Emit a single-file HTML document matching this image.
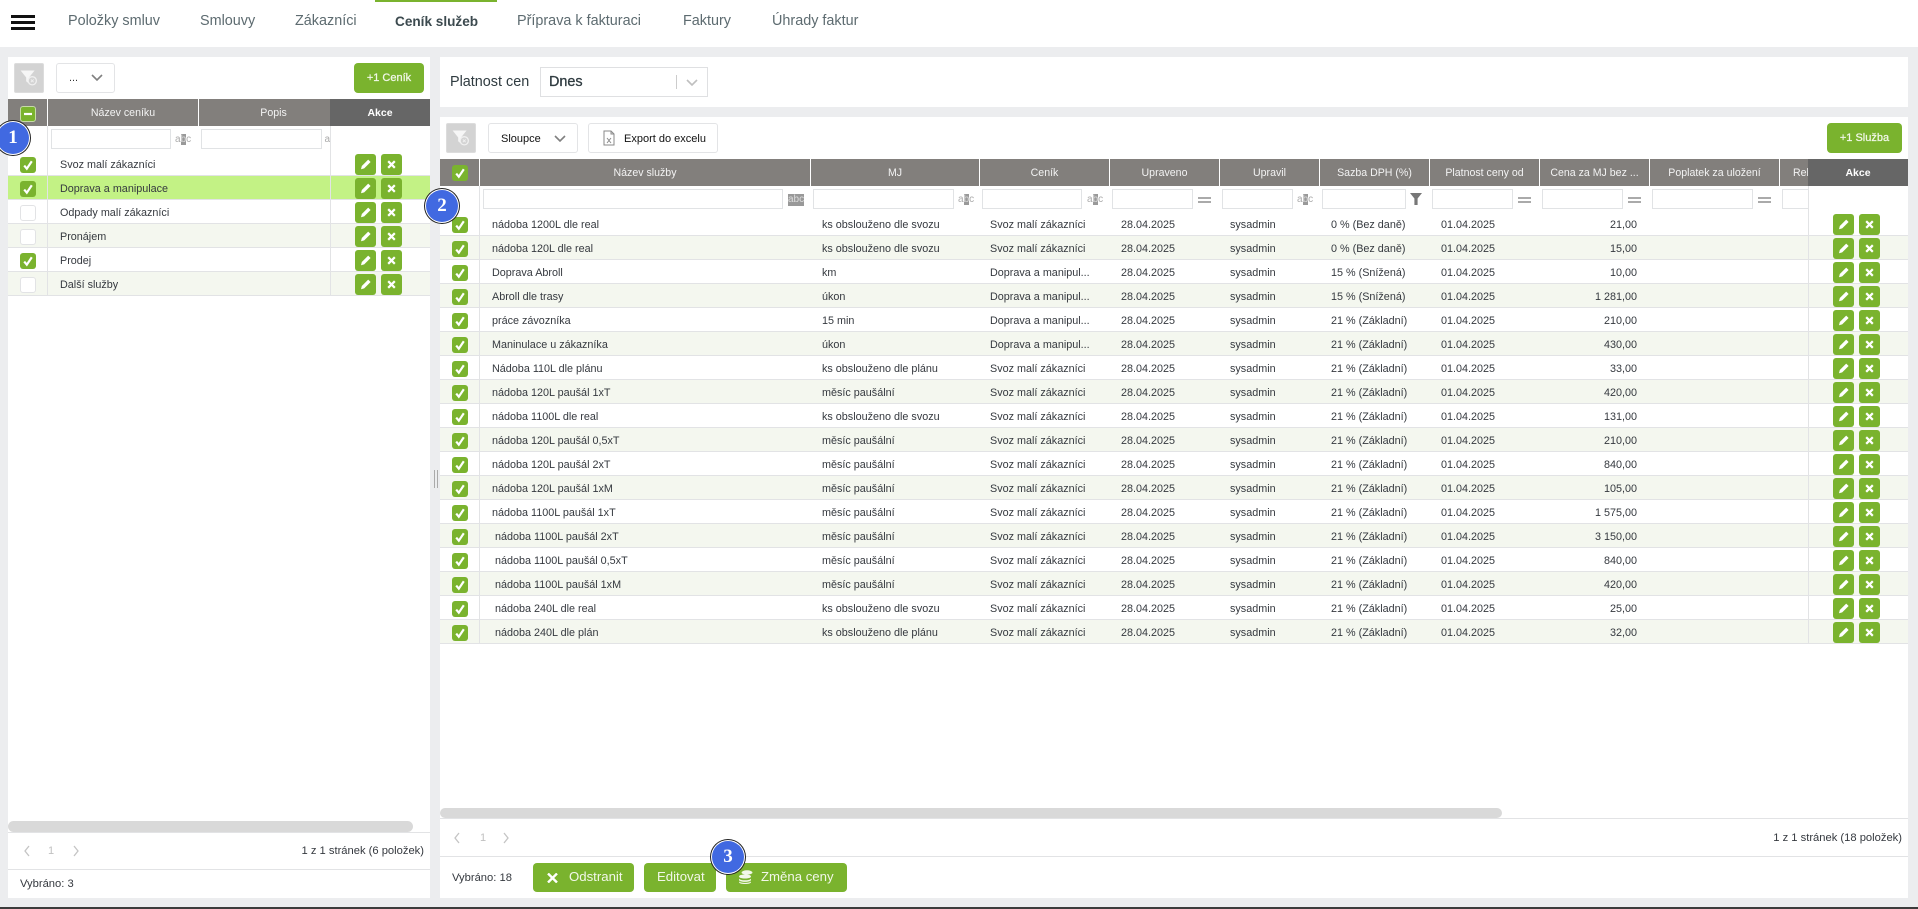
<!DOCTYPE html>
<html lang="cs"><head><meta charset="utf-8"><title>Ceník služeb</title>
<style>
*{box-sizing:border-box}
html,body{margin:0;padding:0;width:1918px;height:909px;overflow:hidden;background:#ecedef;font-family:"Liberation Sans",sans-serif;font-size:10.8px;color:#35393f}
.x{position:absolute}
.nav{left:0;top:0;width:1918px;height:47px;background:#fff}
.nav a{position:absolute;top:13px;font-size:14.4px;line-height:17px;color:#5d6b70;white-space:nowrap}
.nav a.on{color:#3c4a4f;font-weight:bold;font-size:13.6px}
.bar{position:absolute;left:11px;width:24px;height:3px;background:#111}
.panel{position:absolute;background:#fff}
.hd{position:absolute;height:27px;background:#827f7c;color:#f3f3f3;font-size:10.6px;line-height:29px;text-align:center;border-right:1px solid #fff;overflow:hidden;white-space:nowrap}
.ak{background:#666;color:#fff;font-weight:bold;font-size:10.5px;border-right:0}
.inp{position:absolute;height:20px;background:#fff;border:1px solid #e1e3e5}
.abc{position:absolute;width:16px;height:12px;font-size:10px;line-height:12px;color:#aaa;text-align:center;white-space:nowrap}
.abc b{font-weight:normal;background:#999;color:#ddd}
.abc.d{background:#999;color:#ddd}
.eq{position:absolute;width:13px;height:6px;border-top:2px solid #aaa;border-bottom:2px solid #aaa}
.r{position:absolute;height:24px;border-bottom:1px solid #e2e3e5;background:#fff}
.r.alt{background:#f4f7ef}
.r.sel{background:#c3f285}
.r span{position:absolute;top:1px;line-height:24px;white-space:nowrap;overflow:hidden;text-overflow:ellipsis}
.cb{position:absolute;display:block;width:16px;height:16px;border-radius:3px;background:#7ab32e}
.cb svg{display:block;width:16px;height:16px}
.cb.off{background:#fff;border:1px solid #e2e3e5}
.cb.hm{border:1px solid #c7dba8}
.bt{position:absolute;display:block;width:21px;height:21px;border-radius:3px;background:#7ab32e;top:2px}
.bt svg{display:block;width:21px;height:21px}
.btn{position:absolute;background:#7ab32e;color:#f2f7e9;border-radius:4px;text-align:center}
.w{position:absolute;background:#fff;border:1px solid #e3e4e6;border-radius:3px}
.fb{position:absolute;width:30px;height:30px;background:#d3d3d3;border:1px solid #dcdcdc;border-radius:2px}
.vl{position:absolute;width:1px;background:#e2e3e5}
.hl{position:absolute;height:1px;background:#e2e3e5}
.cir{position:absolute;width:32px;height:32px;border-radius:50%;background:#4169e1;color:#fff;font-family:"Liberation Serif",serif;font-weight:bold;font-size:19px;line-height:32px;text-align:center;box-shadow:0 0 0 1px #fff,0 0 0 2px #222}
.t{position:absolute;white-space:nowrap}
.n{left:52px;width:325px}.m{left:382px;width:160px}.c{left:550px;width:124px}.u{left:681px}.v{left:790px}.s{left:891px}.p{left:1001px}.q{left:1101px;width:96px;text-align:right}
.bp{left:1393px}.bx{left:1419px}.lp{left:347px}.lx{left:373px}
.rr{left:0;width:1468px}.rl{left:0;width:422px}
.cr{left:12px;top:5px}.cl{left:12px;top:5px}
.ln{left:52px}
</style></head><body>
<svg width="0" height="0" style="position:absolute">
<symbol id="k" viewBox="0 0 16 16"><path d="M4.2 8.6l2.6 3.1L11.8 4.3" fill="none" stroke="#fff" stroke-width="2.2"/></symbol>
<symbol id="pe" viewBox="0 0 21 21"><path d="M6 15.2l.8-3.2 6.4-6.4 2.4 2.4-6.4 6.4z" fill="#fff"/></symbol>
<symbol id="xx" viewBox="0 0 21 21"><path d="M7.2 7.2l6.6 6.6M13.8 7.2l-6.6 6.6" fill="none" stroke="#fff" stroke-width="2.2"/></symbol>
<symbol id="ch" viewBox="0 0 12 7"><path d="M1 1l5 5 5-5" fill="none" stroke="#808080" stroke-width="1.6"/></symbol>
<symbol id="ff" viewBox="0 0 30 30"><path d="M6 7h15l-6 7.5V21l-3-2.5v-4z" fill="#f6f6f6"/><circle cx="18.5" cy="18" r="4.4" fill="#d3d3d3" stroke="#f0f0f0" stroke-width="1.4"/><path d="M17 16.5l3 3M20 16.5l-3 3" stroke="#f0f0f0" stroke-width="1"/></symbol>
</svg>

<div class="x nav">
<div class="bar" style="top:15px"></div><div class="bar" style="top:21px"></div><div class="bar" style="top:27px"></div>
<div class="x" style="left:375px;top:0;width:122px;height:2px;background:#7ab32e"></div>
<a style="left:68px">Položky smluv</a><a style="left:200px">Smlouvy</a><a style="left:295px">Zákazníci</a><a class="on" style="left:395px">Ceník služeb</a><a style="left:517px">Příprava k fakturaci</a><a style="left:683px">Faktury</a><a style="left:772px">Úhrady faktur</a>
</div>

<!-- LEFT PANEL -->
<div class="panel" style="left:8px;top:57px;width:422px;height:841px"></div>
<div class="fb" style="left:14px;top:63px"><svg width="28" height="28" viewBox="0 0 30 30"><use href="#ff"/></svg></div>
<div class="w" style="left:56px;top:63px;width:59px;height:30px"><span class="t" style="left:12px;top:8px;color:#333">...</span><svg class="x" style="left:34px;top:10px" width="12" height="7"><use href="#ch"/></svg></div>
<div class="btn" style="left:354px;top:63px;width:70px;height:30px;line-height:31px;font-size:11px;-webkit-text-stroke:.25px #f2f7e9">+1 Ceník</div>

<div class="hd" style="left:8px;top:99px;width:40px"></div>
<i class="cb hm" style="left:20px;top:106px"><svg viewBox="0 0 14 14" style="width:14px;height:14px"><path d="M3 7h8" stroke="#fff" stroke-width="2.2"/></svg></i>
<div class="hd" style="left:48px;top:99px;width:151px">Název ceníku</div>
<div class="hd" style="left:199px;top:99px;width:131px;padding-left:18px;border-right:0">Popis</div>
<div class="hd ak" style="left:330px;top:99px;width:100px">Akce</div>

<div class="inp" style="left:51px;top:129px;width:120px"></div>
<span class="abc" style="left:175px;top:134px">a<b>b</b>c</span>
<div class="inp" style="left:201px;top:129px;width:121px"></div>
<span class="abc" style="left:322px;top:134px;text-align:right;width:8px;overflow:hidden">a</span>
<div class="hl" style="left:8px;top:152px;width:422px"></div>

<div class="x" style="left:8px;top:152px;width:422px;height:144px">
<div class="r rl" style="top:0"><i class="cb cl"><svg><use href="#k"/></svg></i><span class="ln">Svoz malí zákazníci</span><i class="bt lp"><svg><use href="#pe"/></svg></i><i class="bt lx"><svg><use href="#xx"/></svg></i></div>
<div class="r rl sel" style="top:24px"><i class="cb cl"><svg><use href="#k"/></svg></i><span class="ln">Doprava a manipulace</span><i class="bt lp"><svg><use href="#pe"/></svg></i><i class="bt lx"><svg><use href="#xx"/></svg></i></div>
<div class="r rl" style="top:48px"><i class="cb cl off"></i><span class="ln">Odpady malí zákazníci</span><i class="bt lp"><svg><use href="#pe"/></svg></i><i class="bt lx"><svg><use href="#xx"/></svg></i></div>
<div class="r rl alt" style="top:72px"><i class="cb cl off"></i><span class="ln">Pronájem</span><i class="bt lp"><svg><use href="#pe"/></svg></i><i class="bt lx"><svg><use href="#xx"/></svg></i></div>
<div class="r rl" style="top:96px"><i class="cb cl"><svg><use href="#k"/></svg></i><span class="ln">Prodej</span><i class="bt lp"><svg><use href="#pe"/></svg></i><i class="bt lx"><svg><use href="#xx"/></svg></i></div>
<div class="r rl alt" style="top:120px"><i class="cb cl off"></i><span class="ln">Další služby</span><i class="bt lp"><svg><use href="#pe"/></svg></i><i class="bt lx"><svg><use href="#xx"/></svg></i></div>
</div>
<div class="vl" style="left:47px;top:126px;height:170px"></div>
<div class="vl" style="left:330px;top:126px;height:170px"></div>

<div class="x" style="left:8px;top:821px;width:405px;height:11px;background:#d9d9d9;border-radius:6px"></div>
<div class="hl" style="left:8px;top:832px;width:422px"></div>
<svg class="x" style="left:22px;top:845px" width="60" height="12"><path d="M7 1L3 6l4 5M52 1l4 5-4 5" fill="none" stroke="#c4c4c4" stroke-width="1.3"/></svg>
<span class="t" style="left:48px;top:845px;color:#c0c0c0;font-size:11px">1</span>
<span class="t" style="right:1494px;top:845px;font-size:11.2px">1 z 1 stránek (6 položek)</span>
<div class="hl" style="left:8px;top:869px;width:422px"></div>
<span class="t" style="left:20px;top:878px;font-size:11.2px">Vybráno: 3</span>

<div class="x" style="left:434px;top:470px;width:4px;height:18px;border-left:1px solid #aaa;border-right:1px solid #aaa"></div>

<!-- TOP RIGHT -->
<div class="panel" style="left:440px;top:57px;width:1468px;height:50px"></div>
<span class="t" style="left:450px;top:74px;font-size:14.4px;color:#2f3b40">Platnost cen</span>
<div class="x" style="left:540px;top:67px;width:168px;height:30px;background:#fff;border:1px solid #dfe0e2"></div>
<span class="t" style="left:549px;top:74px;font-size:14.4px;color:#2f3b40;-webkit-text-stroke:.3px #2f3b40">Dnes</span>
<div class="x" style="left:676px;top:75px;width:1px;height:14px;background:#ccc"></div>
<svg class="x" style="left:686px;top:79px" width="12" height="7"><use href="#ch" style="opacity:.5"/></svg>

<!-- MAIN RIGHT -->
<div class="panel" style="left:440px;top:117px;width:1468px;height:781px"></div>
<div class="fb" style="left:446px;top:123px"><svg width="28" height="28" viewBox="0 0 30 30"><use href="#ff"/></svg></div>
<div class="w" style="left:488px;top:123px;width:90px;height:30px"><span class="t" style="left:12px;top:9px;font-size:11px;color:#111">Sloupce</span><svg class="x" style="left:65px;top:11px" width="12" height="7"><use href="#ch"/></svg></div>
<div class="w" style="left:588px;top:123px;width:130px;height:30px"><svg class="x" style="left:14px;top:6px" width="12" height="16" viewBox="0 0 12 16"><path d="M1 1h7l3 3v11H1zM8 1v3h3" fill="#fff" stroke="#888" stroke-width="1"/><path d="M4 8l4 5M8 8l-4 5" stroke="#888" stroke-width="1"/></svg><span class="t" style="left:35px;top:9px;font-size:11px;color:#111">Export do excelu</span></div>
<div class="btn" style="left:1827px;top:123px;width:75px;height:30px;line-height:31px;font-size:11px;-webkit-text-stroke:.25px #f2f7e9">+1 Služba</div>

<div class="hd" style="left:440px;top:159px;width:40px"></div>
<i class="cb" style="left:452px;top:165px"><svg><use href="#k"/></svg></i>
<div class="hd" style="left:480px;top:159px;width:331px">Název služby</div>
<div class="hd" style="left:811px;top:159px;width:169px">MJ</div>
<div class="hd" style="left:980px;top:159px;width:130px">Ceník</div>
<div class="hd" style="left:1110px;top:159px;width:110px">Upraveno</div>
<div class="hd" style="left:1220px;top:159px;width:100px">Upravil</div>
<div class="hd" style="left:1320px;top:159px;width:110px">Sazba DPH (%)</div>
<div class="hd" style="left:1430px;top:159px;width:110px">Platnost ceny od</div>
<div class="hd" style="left:1540px;top:159px;width:110px">Cena za MJ bez ...</div>
<div class="hd" style="left:1650px;top:159px;width:130px">Poplatek za uložení</div>
<div class="hd" style="left:1780px;top:159px;width:28px;text-align:left;padding-left:13px;border-right:0">Rel</div>
<div class="hd ak" style="left:1808px;top:159px;width:100px">Akce</div>

<div class="inp" style="left:483px;top:189px;width:300px"></div><span class="abc d" style="left:788px;top:194px">abc</span>
<div class="inp" style="left:813px;top:189px;width:141px"></div><span class="abc" style="left:958px;top:194px">a<b>b</b>c</span>
<div class="inp" style="left:982px;top:189px;width:100px"></div><span class="abc" style="left:1087px;top:194px">a<b>b</b>c</span>
<div class="inp" style="left:1112px;top:189px;width:81px"></div><div class="eq" style="left:1198px;top:197px"></div>
<div class="inp" style="left:1222px;top:189px;width:71px"></div><span class="abc" style="left:1297px;top:194px">a<b>b</b>c</span>
<div class="inp" style="left:1322px;top:189px;width:84px"></div><svg class="x" style="left:1410px;top:193px" width="12" height="12"><path d="M0 0h12L7.6 5.5V12H4.4V5.5z" fill="#777"/></svg>
<div class="inp" style="left:1432px;top:189px;width:81px"></div><div class="eq" style="left:1518px;top:197px"></div>
<div class="inp" style="left:1542px;top:189px;width:81px"></div><div class="eq" style="left:1628px;top:197px"></div>
<div class="inp" style="left:1652px;top:189px;width:101px"></div><div class="eq" style="left:1758px;top:197px"></div>
<div class="inp" style="left:1782px;top:189px;width:26px;border-right:0"></div>
<div class="hl" style="left:440px;top:212px;width:1468px"></div>

<div class="x" style="left:440px;top:212px;width:1468px;height:432px">
<div class="r rr" style="top:0"><i class="cb cr"><svg><use href="#k"/></svg></i><span class="n">nádoba 1200L dle real</span><span class="m">ks obslouženo dle svozu</span><span class="c">Svoz malí zákazníci</span><span class="u">28.04.2025</span><span class="v">sysadmin</span><span class="s">0 % (Bez daně)</span><span class="p">01.04.2025</span><span class="q">21,00</span><i class="bt bp"><svg><use href="#pe"/></svg></i><i class="bt bx"><svg><use href="#xx"/></svg></i></div>
<div class="r rr alt" style="top:24px"><i class="cb cr"><svg><use href="#k"/></svg></i><span class="n">nádoba 120L dle real</span><span class="m">ks obslouženo dle svozu</span><span class="c">Svoz malí zákazníci</span><span class="u">28.04.2025</span><span class="v">sysadmin</span><span class="s">0 % (Bez daně)</span><span class="p">01.04.2025</span><span class="q">15,00</span><i class="bt bp"><svg><use href="#pe"/></svg></i><i class="bt bx"><svg><use href="#xx"/></svg></i></div>
<div class="r rr" style="top:48px"><i class="cb cr"><svg><use href="#k"/></svg></i><span class="n">Doprava Abroll</span><span class="m">km</span><span class="c">Doprava a manipul...</span><span class="u">28.04.2025</span><span class="v">sysadmin</span><span class="s">15 % (Snížená)</span><span class="p">01.04.2025</span><span class="q">10,00</span><i class="bt bp"><svg><use href="#pe"/></svg></i><i class="bt bx"><svg><use href="#xx"/></svg></i></div>
<div class="r rr alt" style="top:72px"><i class="cb cr"><svg><use href="#k"/></svg></i><span class="n">Abroll dle trasy</span><span class="m">úkon</span><span class="c">Doprava a manipul...</span><span class="u">28.04.2025</span><span class="v">sysadmin</span><span class="s">15 % (Snížená)</span><span class="p">01.04.2025</span><span class="q">1 281,00</span><i class="bt bp"><svg><use href="#pe"/></svg></i><i class="bt bx"><svg><use href="#xx"/></svg></i></div>
<div class="r rr" style="top:96px"><i class="cb cr"><svg><use href="#k"/></svg></i><span class="n">práce závozníka</span><span class="m">15 min</span><span class="c">Doprava a manipul...</span><span class="u">28.04.2025</span><span class="v">sysadmin</span><span class="s">21 % (Základní)</span><span class="p">01.04.2025</span><span class="q">210,00</span><i class="bt bp"><svg><use href="#pe"/></svg></i><i class="bt bx"><svg><use href="#xx"/></svg></i></div>
<div class="r rr alt" style="top:120px"><i class="cb cr"><svg><use href="#k"/></svg></i><span class="n">Maninulace u zákazníka</span><span class="m">úkon</span><span class="c">Doprava a manipul...</span><span class="u">28.04.2025</span><span class="v">sysadmin</span><span class="s">21 % (Základní)</span><span class="p">01.04.2025</span><span class="q">430,00</span><i class="bt bp"><svg><use href="#pe"/></svg></i><i class="bt bx"><svg><use href="#xx"/></svg></i></div>
<div class="r rr" style="top:144px"><i class="cb cr"><svg><use href="#k"/></svg></i><span class="n">Nádoba 110L dle plánu</span><span class="m">ks obslouženo dle plánu</span><span class="c">Svoz malí zákazníci</span><span class="u">28.04.2025</span><span class="v">sysadmin</span><span class="s">21 % (Základní)</span><span class="p">01.04.2025</span><span class="q">33,00</span><i class="bt bp"><svg><use href="#pe"/></svg></i><i class="bt bx"><svg><use href="#xx"/></svg></i></div>
<div class="r rr alt" style="top:168px"><i class="cb cr"><svg><use href="#k"/></svg></i><span class="n">nádoba 120L paušál 1xT</span><span class="m">měsíc paušální</span><span class="c">Svoz malí zákazníci</span><span class="u">28.04.2025</span><span class="v">sysadmin</span><span class="s">21 % (Základní)</span><span class="p">01.04.2025</span><span class="q">420,00</span><i class="bt bp"><svg><use href="#pe"/></svg></i><i class="bt bx"><svg><use href="#xx"/></svg></i></div>
<div class="r rr" style="top:192px"><i class="cb cr"><svg><use href="#k"/></svg></i><span class="n">nádoba 1100L dle real</span><span class="m">ks obslouženo dle svozu</span><span class="c">Svoz malí zákazníci</span><span class="u">28.04.2025</span><span class="v">sysadmin</span><span class="s">21 % (Základní)</span><span class="p">01.04.2025</span><span class="q">131,00</span><i class="bt bp"><svg><use href="#pe"/></svg></i><i class="bt bx"><svg><use href="#xx"/></svg></i></div>
<div class="r rr alt" style="top:216px"><i class="cb cr"><svg><use href="#k"/></svg></i><span class="n">nádoba 120L paušál 0,5xT</span><span class="m">měsíc paušální</span><span class="c">Svoz malí zákazníci</span><span class="u">28.04.2025</span><span class="v">sysadmin</span><span class="s">21 % (Základní)</span><span class="p">01.04.2025</span><span class="q">210,00</span><i class="bt bp"><svg><use href="#pe"/></svg></i><i class="bt bx"><svg><use href="#xx"/></svg></i></div>
<div class="r rr" style="top:240px"><i class="cb cr"><svg><use href="#k"/></svg></i><span class="n">nádoba 120L paušál 2xT</span><span class="m">měsíc paušální</span><span class="c">Svoz malí zákazníci</span><span class="u">28.04.2025</span><span class="v">sysadmin</span><span class="s">21 % (Základní)</span><span class="p">01.04.2025</span><span class="q">840,00</span><i class="bt bp"><svg><use href="#pe"/></svg></i><i class="bt bx"><svg><use href="#xx"/></svg></i></div>
<div class="r rr alt" style="top:264px"><i class="cb cr"><svg><use href="#k"/></svg></i><span class="n">nádoba 120L paušál 1xM</span><span class="m">měsíc paušální</span><span class="c">Svoz malí zákazníci</span><span class="u">28.04.2025</span><span class="v">sysadmin</span><span class="s">21 % (Základní)</span><span class="p">01.04.2025</span><span class="q">105,00</span><i class="bt bp"><svg><use href="#pe"/></svg></i><i class="bt bx"><svg><use href="#xx"/></svg></i></div>
<div class="r rr" style="top:288px"><i class="cb cr"><svg><use href="#k"/></svg></i><span class="n">nádoba 1100L paušál 1xT</span><span class="m">měsíc paušální</span><span class="c">Svoz malí zákazníci</span><span class="u">28.04.2025</span><span class="v">sysadmin</span><span class="s">21 % (Základní)</span><span class="p">01.04.2025</span><span class="q">1 575,00</span><i class="bt bp"><svg><use href="#pe"/></svg></i><i class="bt bx"><svg><use href="#xx"/></svg></i></div>
<div class="r rr alt" style="top:312px"><i class="cb cr"><svg><use href="#k"/></svg></i><span class="n" style="padding-left:3px">nádoba 1100L paušál 2xT</span><span class="m">měsíc paušální</span><span class="c">Svoz malí zákazníci</span><span class="u">28.04.2025</span><span class="v">sysadmin</span><span class="s">21 % (Základní)</span><span class="p">01.04.2025</span><span class="q">3 150,00</span><i class="bt bp"><svg><use href="#pe"/></svg></i><i class="bt bx"><svg><use href="#xx"/></svg></i></div>
<div class="r rr" style="top:336px"><i class="cb cr"><svg><use href="#k"/></svg></i><span class="n" style="padding-left:3px">nádoba 1100L paušál 0,5xT</span><span class="m">měsíc paušální</span><span class="c">Svoz malí zákazníci</span><span class="u">28.04.2025</span><span class="v">sysadmin</span><span class="s">21 % (Základní)</span><span class="p">01.04.2025</span><span class="q">840,00</span><i class="bt bp"><svg><use href="#pe"/></svg></i><i class="bt bx"><svg><use href="#xx"/></svg></i></div>
<div class="r rr alt" style="top:360px"><i class="cb cr"><svg><use href="#k"/></svg></i><span class="n" style="padding-left:3px">nádoba 1100L paušál 1xM</span><span class="m">měsíc paušální</span><span class="c">Svoz malí zákazníci</span><span class="u">28.04.2025</span><span class="v">sysadmin</span><span class="s">21 % (Základní)</span><span class="p">01.04.2025</span><span class="q">420,00</span><i class="bt bp"><svg><use href="#pe"/></svg></i><i class="bt bx"><svg><use href="#xx"/></svg></i></div>
<div class="r rr" style="top:384px"><i class="cb cr"><svg><use href="#k"/></svg></i><span class="n" style="padding-left:3px">nádoba 240L dle real</span><span class="m">ks obslouženo dle svozu</span><span class="c">Svoz malí zákazníci</span><span class="u">28.04.2025</span><span class="v">sysadmin</span><span class="s">21 % (Základní)</span><span class="p">01.04.2025</span><span class="q">25,00</span><i class="bt bp"><svg><use href="#pe"/></svg></i><i class="bt bx"><svg><use href="#xx"/></svg></i></div>
<div class="r rr alt" style="top:408px"><i class="cb cr"><svg><use href="#k"/></svg></i><span class="n" style="padding-left:3px">nádoba 240L dle plán</span><span class="m">ks obslouženo dle plánu</span><span class="c">Svoz malí zákazníci</span><span class="u">28.04.2025</span><span class="v">sysadmin</span><span class="s">21 % (Základní)</span><span class="p">01.04.2025</span><span class="q">32,00</span><i class="bt bp"><svg><use href="#pe"/></svg></i><i class="bt bx"><svg><use href="#xx"/></svg></i></div>
</div>
<div class="vl" style="left:479px;top:186px;height:458px"></div>
<div class="vl" style="left:1808px;top:186px;height:458px"></div>

<div class="x" style="left:440px;top:808px;width:1062px;height:10px;background:#d9d9d9;border-radius:5px"></div>
<div class="hl" style="left:440px;top:818px;width:1468px"></div>
<svg class="x" style="left:452px;top:832px" width="60" height="12"><path d="M7 1L3 6l4 5M52 1l4 5-4 5" fill="none" stroke="#c4c4c4" stroke-width="1.3"/></svg>
<span class="t" style="left:480px;top:832px;color:#c0c0c0;font-size:11px">1</span>
<span class="t" style="right:16px;top:832px;font-size:11.2px">1 z 1 stránek (18 položek)</span>
<div class="hl" style="left:440px;top:856px;width:1468px"></div>
<span class="t" style="left:452px;top:872px;font-size:11.2px">Vybráno: 18</span>

<div class="btn" style="left:533px;top:863px;width:101px;height:29px"><svg class="x" style="left:14px;top:10px" width="11" height="10"><path d="M1 0.5l9 9M10 0.5l-9 9" stroke="#fff" stroke-width="2.4"/></svg><span class="t" style="left:36px;top:6px;font-size:13.2px">Odstranit</span></div>
<div class="btn" style="left:644px;top:863px;width:72px;height:29px"><span class="t" style="left:13px;top:6px;font-size:13.2px">Editovat</span></div>
<div class="btn" style="left:726px;top:863px;width:121px;height:29px"><svg class="x" style="left:12px;top:7px" width="15" height="14" viewBox="0 0 15 14"><ellipse cx="9" cy="2.5" rx="5.5" ry="2.2" fill="#f2f7e9"/><path d="M1 6.5c0-1.2 2.4-2 6-2s6 .8 6 2-2.4 2-6 2-6-.8-6-2zM1 8.7v1.2c0 1.2 2.4 2 6 2s6-.8 6-2V8.7c-1 1-3.2 1.6-6 1.6S2 9.7 1 8.7zM1 11.5v.6c0 1.2 2.4 1.9 6 1.9s6-.7 6-1.9v-.6c-1 .9-3.2 1.4-6 1.4s-5-.5-6-1.4z" fill="#f2f7e9"/></svg><span class="t" style="left:35px;top:6px;font-size:13.2px">Změna ceny</span></div>

<div class="cir" style="left:-3px;top:122px">1</div>
<div class="cir" style="left:426px;top:190px">2</div>
<div class="cir" style="left:712px;top:841px">3</div>

<div class="x" style="left:0;top:907px;width:1918px;height:2px;background:#3c3c3c"></div>
</body></html>
